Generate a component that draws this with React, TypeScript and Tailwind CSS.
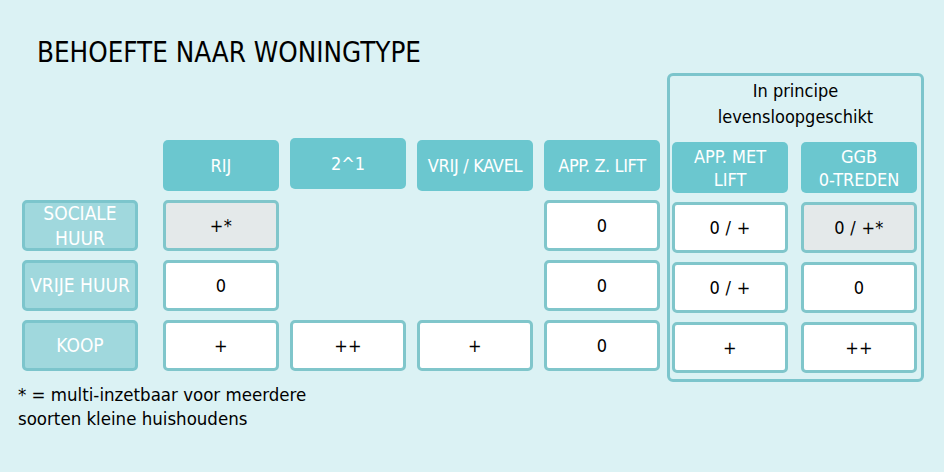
const font = "font-['DejaVu_Sans_Condensed','DejaVu_Sans',sans-serif]"

function Head({ children, className = '' }: { children: React.ReactNode; className?: string }) {
  return (
    <div className={`h-[51px] w-[116px] rounded-[5px] bg-[#6bc7cf] flex items-center justify-center text-center text-[18px] leading-[23px] text-white whitespace-nowrap ${className}`}>
      {children}
    </div>
  )
}

function Label({ children }: { children: React.ReactNode }) {
  return (
    <div className="h-[51px] w-[116px] rounded-[5px] border-[3px] border-[#7cc5cc] bg-[#a0d8dd] flex items-center justify-center text-center text-[19px] leading-[25px] text-white whitespace-nowrap">
      {children}
    </div>
  )
}

function Cell({ v, gray }: { v?: string; gray?: boolean }) {
  if (v === undefined) return <div className="h-[51px] w-[116px]" />
  return (
    <div className={`h-[51px] w-[116px] rounded-[5px] border-[3px] border-[#80c6cb] flex items-center justify-center text-[18px] tracking-[0.3px] text-black ${gray ? 'bg-[#e4e9ea]' : 'bg-white'}`}>
      {v}
    </div>
  )
}

export default function App() {
  return (
    <div className={`w-[944px] h-[472px] bg-[#dbf2f4] overflow-hidden ${font}`}>
      <h1 className="pl-[37px] pt-[36px] text-[27.5px] leading-[32px] text-black">BEHOEFTE NAAR WONINGTYPE</h1>

      <div className="flex items-start pl-[22px] mt-[5px]">
        <div className="mt-[67px] flex flex-col gap-[9px]">
          <div className="h-[51px]" />
          <Label>SOCIALE<br />HUUR</Label>
          <Label>VRIJE HUUR</Label>
          <Label>KOOP</Label>
        </div>

        <div className="mt-[67px] ml-[25px] grid grid-cols-4 gap-x-[11px] gap-y-[9px]">
          <Head>RIJ</Head>
          <Head className="-translate-y-[2px]">2^1</Head>
          <Head className="tracking-[-0.3px]">VRIJ / KAVEL</Head>
          <Head className="text-[17px] tracking-[-0.4px]">APP. Z. LIFT</Head>

          <Cell v="+*" gray />
          <Cell />
          <Cell />
          <Cell v="0" />

          <Cell v="0" />
          <Cell />
          <Cell />
          <Cell v="0" />

          <Cell v="+" />
          <Cell v="++" />
          <Cell v="+" />
          <Cell v="0" />
        </div>

        <div className="ml-[7px] w-[257px] h-[309px] rounded-[6px] border-[3px] border-[#7cc5cc] px-[2px]">
          <div className="h-[66px] pt-[2px] text-center text-[18px] leading-[26px] text-black">
            In principe<br />levensloopgeschikt
          </div>
          <div className="grid grid-cols-2 gap-x-[11px] gap-y-[9px]">
            <Head>APP. MET<br />LIFT</Head>
            <Head>GGB<br />0-TREDEN</Head>
            <Cell v="0 / +" />
            <Cell v="0 / +*" gray />
            <Cell v="0 / +" />
            <Cell v="0" />
            <Cell v="+" />
            <Cell v="++" />
          </div>
        </div>
      </div>

      <p className="pl-[18px] mt-[1px] text-[18.5px] leading-[24px] text-black">
        * = multi-inzetbaar voor meerdere<br />soorten kleine huishoudens
      </p>
    </div>
  )
}
